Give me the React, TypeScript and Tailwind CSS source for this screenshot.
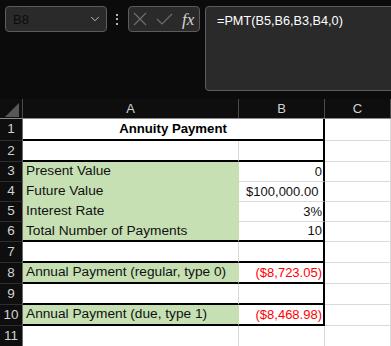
import { ChevronDown } from 'lucide-react';

type Row = {
  n: number;
  h: string;
  a?: string;
  b?: string;
  green?: boolean;
  red?: boolean;
  merged?: boolean;
  thick?: boolean;
  boxed?: boolean;
};

const rows: Row[] = [
  { n: 1, h: 'h-[22px]', a: 'Annuity Payment', merged: true, thick: true, boxed: true },
  { n: 2, h: 'h-[21px]', thick: true, boxed: true },
  { n: 3, h: 'h-[20px]', a: 'Present Value', b: '0', green: true, boxed: true },
  { n: 4, h: 'h-[20px]', a: 'Future Value', b: '$100,000.00 ', green: true, boxed: true },
  { n: 5, h: 'h-[20px]', a: 'Interest Rate', b: '3%', green: true, boxed: true },
  { n: 6, h: 'h-[20px]', a: 'Total Number of Payments', b: '10', green: true, thick: true, boxed: true },
  { n: 7, h: 'h-[21px]', thick: true, boxed: true },
  { n: 8, h: 'h-[21px]', a: 'Annual Payment (regular, type 0)', b: '($8,723.05)', green: true, red: true, thick: true, boxed: true },
  { n: 9, h: 'h-[21px]', thick: true, boxed: true },
  { n: 10, h: 'h-[21px]', a: 'Annual Payment (due, type 1)', b: '($8,468.98)', green: true, red: true, thick: true, boxed: true },
  { n: 11, h: 'h-[21px]' },
];

function FormulaBar() {
  return (
    <div className="h-[99px] flex items-start pt-[6px] pl-[5px]">
      <div className="w-[102px] h-[26px] shrink-0 rounded-[4px] border border-[#5c5c5c] bg-[#2a2a2a] flex items-center justify-between pl-[7px] pr-[4px]">
        <span className="text-[13px] text-[#0c0c0c] leading-none">B8</span>
        <ChevronDown size={14} strokeWidth={1.5} className="text-[#cfcfcf]" />
      </div>
      <div className="ml-[9px] h-[26px] flex flex-col justify-center gap-[2.5px]">
        <div className="w-[2px] h-[2px] bg-[#b5b5b5]" />
        <div className="w-[2px] h-[2px] bg-[#b5b5b5]" />
        <div className="w-[2px] h-[2px] bg-[#b5b5b5]" />
      </div>
      <div className="ml-[10px] w-[72px] h-[26px] shrink-0 rounded-[4px] border border-[#5c5c5c] bg-[#2a2a2a] flex items-center pl-[4px]">
        <svg width="14" height="14" viewBox="0 0 14 14" className="text-[#6e6e6e]">
          <path d="M1 1 L13 13 M13 1 L1 13" stroke="currentColor" strokeWidth="1.2" fill="none" />
        </svg>
        <svg width="17" height="12" viewBox="0 0 17 12" className="ml-[9px] text-[#6e6e6e]">
          <path d="M1 6 L6 11 L16 1" stroke="currentColor" strokeWidth="1.2" fill="none" />
        </svg>
        <span className="ml-[9px] font-['Liberation_Serif',serif] italic text-[17px] leading-none text-[#d6d6d6]">fx</span>
      </div>
      <div className="ml-[5px] w-[240px] h-[85px] shrink-0 rounded-[4px] border border-[#5c5c5c] bg-[#2a2a2a] pl-[11px] pt-[5px] text-[12.7px] leading-[18px] text-white">
        =PMT(B5,B6,B3,B4,0)
      </div>
    </div>
  );
}

function Header() {
  return (
    <div className="h-[20px] flex bg-[#0e0e0e] border-b border-b-[#8a8a8a] text-[13px] text-[#d2d2d2]">
      <div className="w-[23px] shrink-0 border-r border-r-[#4a4a4a]">
        <svg width="22" height="19" viewBox="0 0 22 19">
          <polygon points="19,4 19,18 5,18" fill="#575757" />
        </svg>
      </div>
      <div className="w-[216px] shrink-0 border-r border-r-[#4a4a4a] flex items-center justify-center">A</div>
      <div className="w-[86px] shrink-0 border-r border-r-[#4a4a4a] flex items-center justify-center">B</div>
      <div className="w-[66px] shrink-0 border-r border-r-[#4a4a4a] flex items-center justify-center">C</div>
      <div className="flex-1" />
    </div>
  );
}

function SheetRow({ r }: { r: Row }) {
  const aBottom = r.thick
    ? 'border-b-2 border-b-black'
    : r.green
      ? 'border-b border-b-[#c6e0b4]'
      : 'border-b border-b-[#dadada]';
  const bBottom = r.thick ? 'border-b-2 border-b-black' : 'border-b border-b-[#dadada]';
  const bRight = r.boxed ? 'border-r-2 border-r-black' : 'border-r border-r-[#dadada]';
  return (
    <div className={`${r.h} flex`}>
      <div className="w-[23px] shrink-0 bg-[#0e0e0e] border-r border-r-[#6a6a6a] border-b border-b-[#2e2e2e] flex items-center justify-center text-[13.5px] text-[#d2d2d2]">
        {r.n}
      </div>
      {r.merged ? (
        <div className={`w-[302px] shrink-0 bg-white ${aBottom} ${bRight} flex items-center justify-center font-bold text-[13.2px] text-black`}>
          {r.a}
        </div>
      ) : (
        <>
          <div
            className={`w-[216px] shrink-0 ${r.green ? 'bg-[#c6e0b4] border-r border-r-[#c6e0b4]' : 'bg-white border-r border-r-[#dadada]'} ${aBottom} flex items-center pl-[3px] text-[13.7px] text-[#111] whitespace-nowrap`}
          >
            {r.a}
          </div>
          <div
            className={`w-[86px] shrink-0 bg-white ${bRight} ${bBottom} flex items-center justify-end pr-[1px] text-[13px] whitespace-pre ${r.red ? 'text-[#ff0000]' : 'text-[#111]'}`}
          >
            {r.b}
          </div>
        </>
      )}
      <div className="w-[66px] shrink-0 bg-white border-r border-r-[#dadada] border-b border-b-[#dadada]" />
      <div className="flex-1 bg-white border-b border-b-[#dadada]" />
    </div>
  );
}

export default function App() {
  return (
    <div className="w-[391px] h-[346px] overflow-hidden bg-[#0b0b0b] font-['Liberation_Sans',Arial,sans-serif]">
      <FormulaBar />
      <Header />
      {rows.map(r => (
        <SheetRow key={r.n} r={r} />
      ))}
    </div>
  );
}
